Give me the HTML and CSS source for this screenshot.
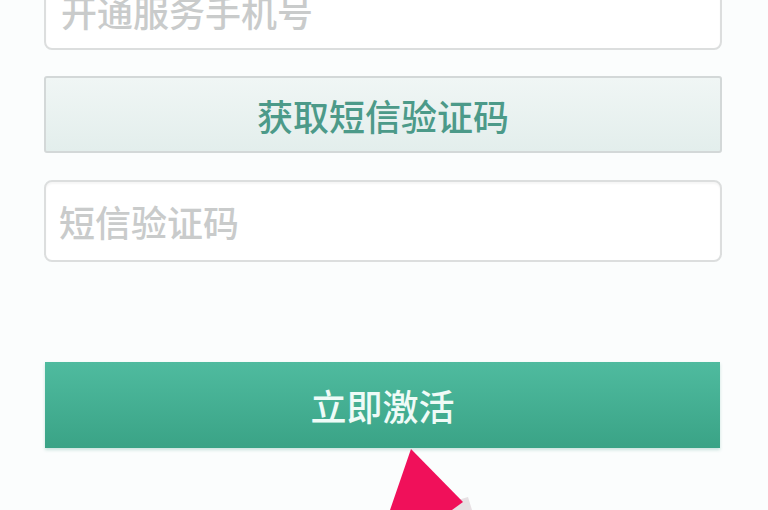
FILE: index.html
```html
<!DOCTYPE html>
<html lang="zh-CN">
<head>
<meta charset="utf-8">
<link rel="stylesheet" href="styles.css">
</head>
<body>
<div class="page">
  <div class="form">
    <div class="field first"><span class="ph">开通服务手机号</span></div>
    <div class="sms-btn">获取短信验证码</div>
    <div class="field"><span class="ph">短信验证码</span></div>
    <div class="activate">立即激活</div>
  </div>
  <svg class="arrow" width="768" height="510" viewBox="0 0 768 510">
    <polygon points="458,500 468,497 472,510 452,510" fill="#e6e0e3"/>
    <polygon points="411,449 390,510 452,510 463,502" fill="#f0105a"/>
  </svg>
</div>
</body>
</html>
```
FILE: styles.css
```css
html, body {
  margin: 0;
  padding: 0;
  background: #fbfdfd;
}
.page {
  position: relative;
  width: 768px;
  height: 510px;
  overflow: hidden;
  font-family: "Noto Sans CJK SC", "Noto Sans", sans-serif;
}
.form {
  display: flex;
  flex-direction: column;
  padding: 0 46px 0 44px;
  margin-top: -32px;
}
.field {
  height: 78px;
  border: 2px solid #dcdede;
  border-radius: 8px;
  background: #ffffff;
  display: flex;
  align-items: center;
  padding-left: 13px;
  box-shadow: inset 0 2px 2px rgba(0,0,0,0.04);
}
.field.first {
  padding-left: 15px;
}
.field.first .ph {
  margin-top: 4px;
}
.ph {
  font-size: 36px;
  font-weight: 500;
  color: #c9cbcb;
}
.sms-btn {
  margin-top: 26px;
  margin-bottom: 27px;
  height: 73px;
  border: 2px solid #d3d8d8;
  border-radius: 3px;
  background: linear-gradient(#f0f6f5, #e3eeec);
  display: flex;
  align-items: center;
  justify-content: center;
  font-size: 36px;
  font-weight: 500;
  color: #4c9a89;
}
.activate {
  margin-top: 100px;
  margin-left: 1px;
  margin-right: 2px;
  height: 86px;
  background: linear-gradient(#4fbb9f, #3aa386);
  display: flex;
  align-items: center;
  justify-content: center;
  font-size: 36px;
  font-weight: 500;
  color: #effbf7;
  box-shadow: 0 2px 3px rgba(60,150,130,0.25);
}
.arrow {
  position: absolute;
  left: 0;
  top: 0;
}
```
